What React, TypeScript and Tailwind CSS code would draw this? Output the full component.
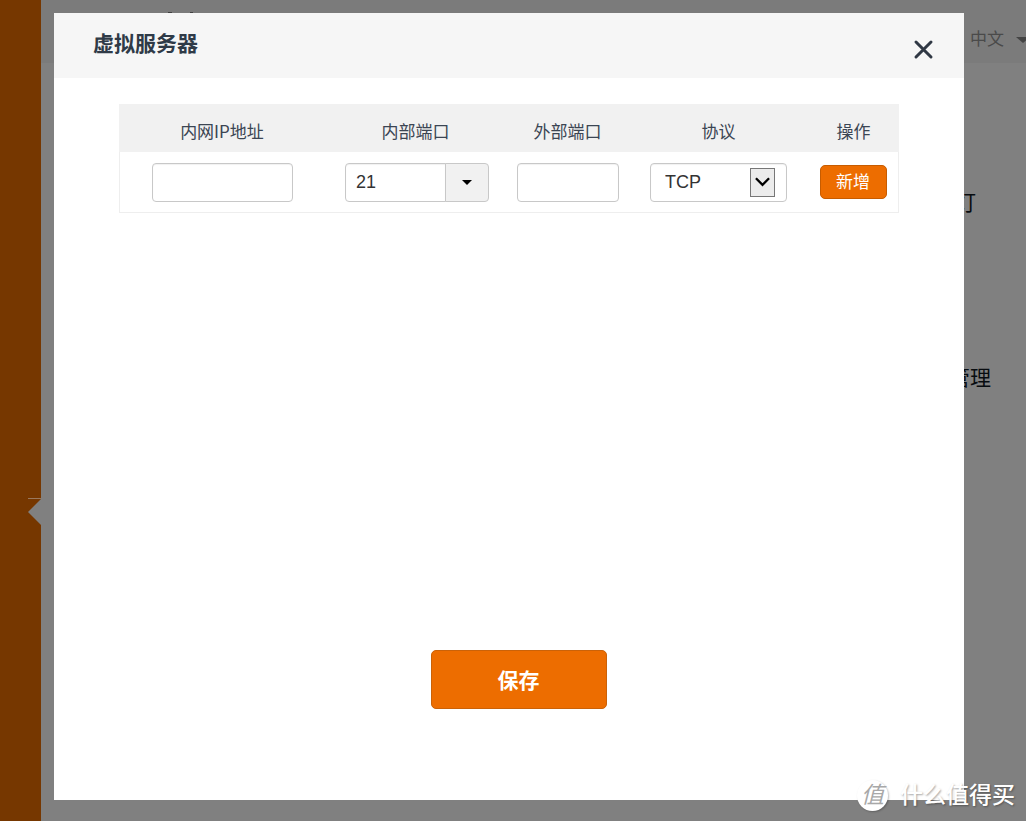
import { useState } from "react";

const columns = [
  { label: "内网IP地址", width: "w-[206px]" },
  { label: "内部端口", width: "w-[181px]" },
  { label: "外部端口", width: "w-[123px]" },
  { label: "协议", width: "w-[179px]" },
  { label: "操作", width: "w-[91px]" },
];

const field =
  "h-[39px] border border-[#c8c8c8] bg-white text-lg text-[#333] shadow-[inset_0_1px_1px_rgba(0,0,0,0.06)] outline-none";

function Backdrop() {
  return (
    <div className="absolute inset-0 flex overflow-hidden bg-[#808080]">
      <aside className="relative w-[41px] shrink-0 bg-[#763700]">
        <svg className="absolute top-[498px] right-0" width="13" height="28" viewBox="0 0 13 28" aria-hidden="true">
          <path d="M0 0.5H13" stroke="#9a785d" />
          <path d="M13 1V27L0 14Z" fill="#808080" />
        </svg>
      </aside>
      <div className="flex min-w-0 flex-1 flex-col">
        <header className="relative flex h-[63px] shrink-0 items-center justify-end bg-[#7b7b7b] pt-4">
          <svg className="absolute top-3 left-[126px]" width="30" height="1" viewBox="0 0 30 1" aria-hidden="true">
            <path d="M1 0h4v1h-4zM23 0h3v1h-3z" fill="#404040" />
          </svg>
          <button type="button" className="flex items-center gap-3 text-[17px] leading-6 text-[#4a4a4a]">
            中文
            <svg className="-mr-1" width="14" height="6" viewBox="0 0 14 6" aria-hidden="true">
              <path d="M0 0H14L7 6Z" fill="#444" />
            </svg>
          </button>
        </header>
        <div className="flex flex-col items-end pt-[124px] text-[21px] leading-8 text-[#080c10]">
          <p className="pr-[50px]">灯</p>
          <p className="mt-[143px] pr-[35px]">管理</p>
        </div>
      </div>
    </div>
  );
}

function Watermark() {
  return (
    <div className="absolute right-[11px] bottom-2 flex items-center gap-3 text-white">
      <span className="flex size-[31px] items-center justify-center rounded-full bg-white text-[23px] leading-none text-[#a8a8a8] italic shadow-[1px_1px_2px_rgba(0,0,0,0.25)]">
        值
      </span>
      <span className="text-[23px] leading-9 font-medium [text-shadow:1px_1px_2px_rgba(0,0,0,0.35)]">什么值得买</span>
    </div>
  );
}

export default function App() {
  const [ip, setIp] = useState("");
  const [inner, setInner] = useState("21");
  const [outer, setOuter] = useState("");
  const [protocol, setProtocol] = useState("TCP");

  return (
    <div className="relative flex min-h-screen flex-col overflow-hidden pt-[13px] pr-[62px] pb-[21px] pl-[54px] font-['Liberation_Sans','Noto_Sans_CJK_SC',sans-serif]">
      <Backdrop />
      <section role="dialog" aria-labelledby="dialog-title" className="relative flex flex-1 flex-col bg-white">
        <header className="flex h-[65px] items-center justify-between bg-[#f6f6f6] pr-[30px] pl-[39px]">
          <h1 id="dialog-title" className="pb-1 text-[21px] leading-8 font-bold text-[#2f3a47]">虚拟服务器</h1>
          <button type="button" aria-label="关闭" className="mt-2">
            <svg width="21" height="21" viewBox="0 0 21 21" fill="none" stroke="#303844" strokeWidth="3" strokeLinecap="round" aria-hidden="true">
              <path d="M3 3L18 18M18 3L3 18" />
            </svg>
          </button>
        </header>

        <div className="flex flex-1 flex-col px-[65px] pt-[26px]">
          <table className="w-full table-fixed border-separate border-spacing-0">
            <thead>
              <tr className="h-12 bg-[#f1f1f1]">
                {columns.map((c) => (
                  <th key={c.label} scope="col" className={`${c.width} pt-1.5 font-['Noto_Sans_CJK_SC',sans-serif] text-[17px] leading-6 font-normal text-[#3b4553]`}>
                    {c.label}
                  </th>
                ))}
              </tr>
            </thead>
            <tbody>
              <tr className="h-[61px] text-center align-middle">
                <td className="border-b border-l border-[#eee]">
                  <input aria-label="内网IP地址" value={ip} onChange={(e) => setIp(e.target.value)} className={`${field} w-[141px] rounded px-3 align-middle`} />
                </td>
                <td className="border-b border-[#eee] pl-[3px]">
                  <div className="flex justify-center">
                    <input aria-label="内部端口" value={inner} onChange={(e) => setInner(e.target.value)} className={`${field} w-[101px] rounded-l px-[10px]`} />
                    <button type="button" aria-label="选择端口" className="-ml-px flex h-[39px] w-11 items-center justify-center rounded-r border border-[#c8c8c8] bg-[#f1f1f1]">
                      <svg width="10" height="5" viewBox="0 0 10 5" aria-hidden="true">
                        <path d="M0 0H10L5 5Z" fill="#000" />
                      </svg>
                    </button>
                  </div>
                </td>
                <td className="border-b border-[#eee]">
                  <input aria-label="外部端口" value={outer} onChange={(e) => setOuter(e.target.value)} className={`${field} w-[102px] rounded px-3 align-middle`} />
                </td>
                <td className="border-b border-[#eee]">
                  <div className="relative mx-auto w-[137px]">
                    <select aria-label="协议" value={protocol} onChange={(e) => setProtocol(e.target.value)} className={`${field} block w-full appearance-none rounded px-[14px]`}>
                      <option>TCP</option>
                      <option>UDP</option>
                    </select>
                    <span className="pointer-events-none absolute top-[5px] right-3 flex h-[29px] w-[25px] items-center justify-center border border-[#777] bg-[#ececec]">
                      <svg width="15" height="10" viewBox="0 0 16 10" fill="none" stroke="#000" strokeWidth="2.5" aria-hidden="true">
                        <path d="M1 1L8 8L15 1" />
                      </svg>
                    </span>
                  </div>
                </td>
                <td className="border-r border-b border-[#eee]">
                  <button type="button" className="h-[34px] w-[67px] rounded-[5px] border border-[#c75c00] bg-[#ed6d00] pt-0.5 align-middle text-[17px] leading-6 text-white">
                    新增
                  </button>
                </td>
              </tr>
            </tbody>
          </table>
        </div>

        <div className="flex justify-center pb-[91px] pl-[19px]">
          <button type="button" className="h-[59px] w-44 rounded-[5px] border border-[#cb6208] bg-[#ed6d00] pt-0.5 text-[21px] leading-8 font-bold text-white">
            保存
          </button>
        </div>
      </section>
      <Watermark />
    </div>
  );
}
